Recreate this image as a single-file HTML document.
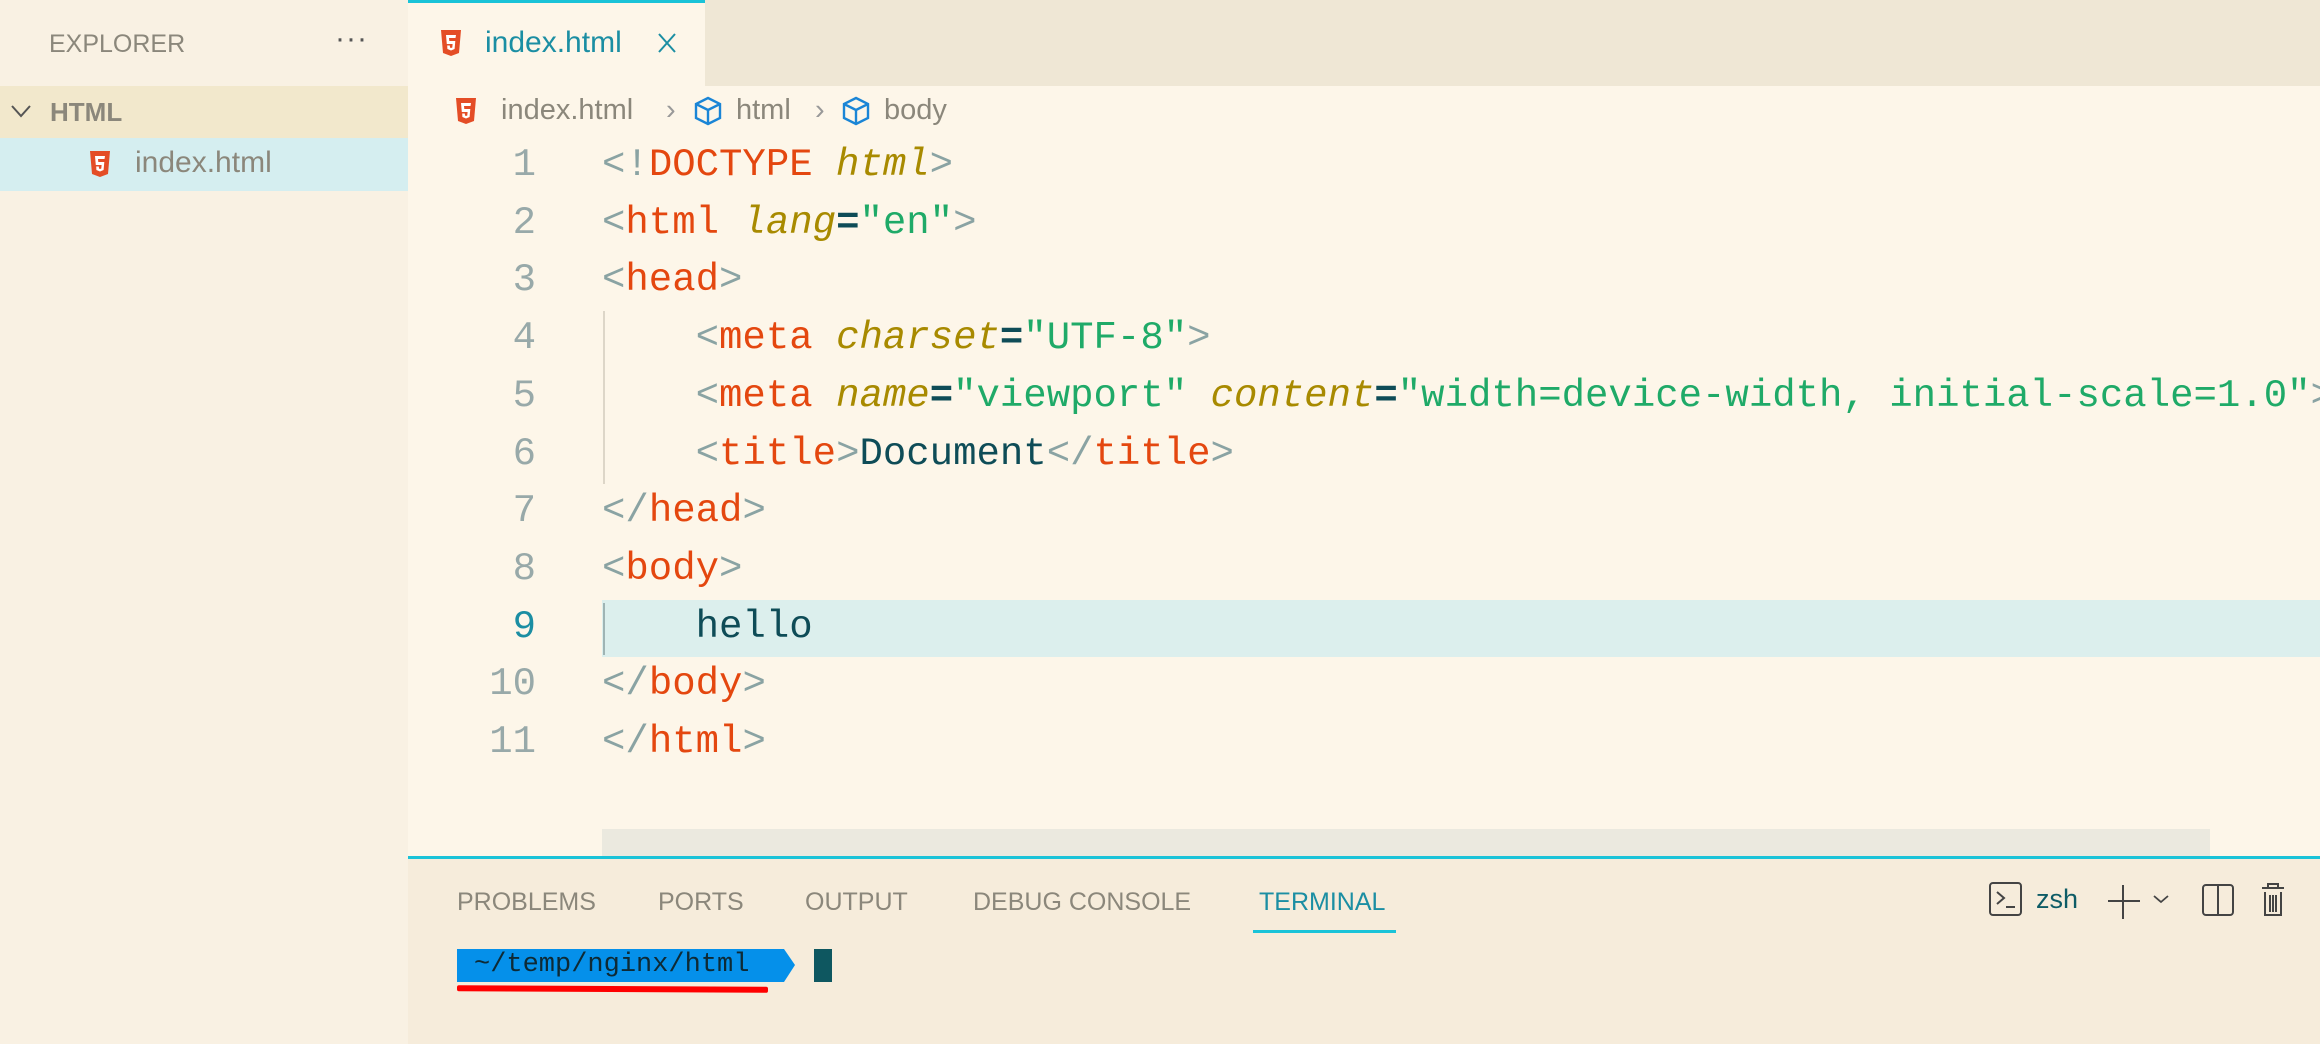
<!DOCTYPE html>
<html><head><style>
*{margin:0;padding:0;box-sizing:border-box}
body{width:2320px;height:1044px;overflow:hidden;background:#fdf6e9;font-family:"Liberation Sans",sans-serif;position:relative}
.side{position:absolute;left:0;top:0;width:408px;height:1044px;background:#f9f1e3}
.abs{position:absolute}
.tabbar{position:absolute;left:408px;top:0;right:0;height:86px;background:#efe7d5}
.tab{position:absolute;left:408px;top:0;width:297px;height:86px;background:#fdf6e9;border-top:3px solid #1ac3d8}
.code{position:absolute;left:0;top:137px;width:2320px;font-family:"Liberation Mono",monospace;font-size:39px;line-height:57.7px;white-space:pre}
.ln{position:absolute;top:0;left:440px;width:96px;text-align:right;color:#98a9a9}
.tx{position:absolute;top:0;left:602px;color:#0e4c57}
.t{color:#e4470f}.a{color:#a88a00;font-style:italic}.s{color:#1faa68}.p{color:#8aa3a3}.e{color:#0e4c57;font-weight:bold}
.panel{position:absolute;left:408px;top:856px;right:0;bottom:0;background:#f6ecdb;border-top:3px solid #1ac3d8}
.ptab{position:absolute;top:888px;font-size:25px;color:#8b877b}
</style></head><body>
<div class="side"></div>
<div class="abs" style="left:49px;top:30px;font-size:25px;color:#8b877b">EXPLORER</div>
<div class="abs" style="left:335px;top:22px;font-size:30px;color:#555;letter-spacing:1px">···</div>
<div class="abs" style="left:0;top:86px;width:408px;height:52px;background:#f2e8cc"></div>
<svg class="abs" style="left:10px;top:102px" width="22" height="18"><path d="M2 4 L11 14 L20 4" fill="none" stroke="#555" stroke-width="2"/></svg>
<div class="abs" style="left:50px;top:97px;font-size:26px;font-weight:bold;color:#8b877b">HTML</div>
<div class="abs" style="left:0;top:138px;width:408px;height:53px;background:#d5eef0"></div>
<svg class="abs" style="left:89px;top:150px" width="22" height="28" viewBox="0 0 22 28"><path d="M1 1H21L19 24L11 27L3 24Z" fill="#e44d26"/><path d="M6 6H16L15.5 9H9L9.3 12H15.3L14.6 20L11 21.5L7.4 20L7.2 16.5H9.8L10 18.5L11 19L12.3 18.5L12.6 15H6.8Z" fill="#fff"/></svg>
<div class="abs" style="left:135px;top:146px;font-size:30px;color:#8b877b">index.html</div>

<div class="tabbar"></div>
<div class="tab"></div>
<svg class="abs" style="left:440px;top:29px" width="22" height="28" viewBox="0 0 22 28"><path d="M1 1H21L19 24L11 27L3 24Z" fill="#e44d26"/><path d="M6 6H16L15.5 9H9L9.3 12H15.3L14.6 20L11 21.5L7.4 20L7.2 16.5H9.8L10 18.5L11 19L12.3 18.5L12.6 15H6.8Z" fill="#fff"/></svg>
<div class="abs" style="left:485px;top:26px;font-size:30px;color:#1b8ea3">index.html</div>
<svg class="abs" style="left:657px;top:32px" width="20" height="22"><path d="M2 2L18 20M18 2L2 20" stroke="#1b8ea3" stroke-width="2"/></svg>

<svg class="abs" style="left:455px;top:97px" width="22" height="28" viewBox="0 0 22 28"><path d="M1 1H21L19 24L11 27L3 24Z" fill="#e44d26"/><path d="M6 6H16L15.5 9H9L9.3 12H15.3L14.6 20L11 21.5L7.4 20L7.2 16.5H9.8L10 18.5L11 19L12.3 18.5L12.6 15H6.8Z" fill="#fff"/></svg>
<div class="abs" style="left:501px;top:94px;font-size:29px;color:#8b877b">index.html</div>
<div class="abs" style="left:666px;top:94px;font-size:29px;color:#999">›</div>
<svg class="abs" style="left:693px;top:96px" width="30" height="30" viewBox="0 0 30 30"><path d="M15 2L27 8V22L15 28L3 22V8Z M3 8L15 14L27 8 M15 14V28" fill="none" stroke="#1a85d6" stroke-width="2.4"/></svg>
<div class="abs" style="left:736px;top:94px;font-size:29px;color:#8b877b">html</div>
<div class="abs" style="left:815px;top:94px;font-size:29px;color:#999">›</div>
<svg class="abs" style="left:841px;top:96px" width="30" height="30" viewBox="0 0 30 30"><path d="M15 2L27 8V22L15 28L3 22V8Z M3 8L15 14L27 8 M15 14V28" fill="none" stroke="#1a85d6" stroke-width="2.4"/></svg>
<div class="abs" style="left:884px;top:94px;font-size:29px;color:#8b877b">body</div>

<div class="abs" style="left:602px;top:600px;right:0;height:57px;background:#dcefed"></div>
<div class="abs" style="left:603px;top:311px;width:2px;height:173px;background:#ddd6c8"></div>
<div class="abs" style="left:603px;top:603px;width:2px;height:52px;background:#9fb4b4"></div>
<div class="code"><div class="ln">1
2
3
4
5
6
7
8
<span style="color:#1b8ea3">9</span>
10
11</div><div class="tx"><span class="p">&lt;!</span><span class="t">DOCTYPE</span> <span class="a">html</span><span class="p">&gt;</span>
<span class="p">&lt;</span><span class="t">html</span> <span class="a">lang</span><span class="e">=</span><span class="s">"en"</span><span class="p">&gt;</span>
<span class="p">&lt;</span><span class="t">head</span><span class="p">&gt;</span>
    <span class="p">&lt;</span><span class="t">meta</span> <span class="a">charset</span><span class="e">=</span><span class="s">"UTF-8"</span><span class="p">&gt;</span>
    <span class="p">&lt;</span><span class="t">meta</span> <span class="a">name</span><span class="e">=</span><span class="s">"viewport"</span> <span class="a">content</span><span class="e">=</span><span class="s">"width=device-width, initial-scale=1.0"</span><span class="p">&gt;</span>
    <span class="p">&lt;</span><span class="t">title</span><span class="p">&gt;</span>Document<span class="p">&lt;/</span><span class="t">title</span><span class="p">&gt;</span>
<span class="p">&lt;/</span><span class="t">head</span><span class="p">&gt;</span>
<span class="p">&lt;</span><span class="t">body</span><span class="p">&gt;</span>
    hello
<span class="p">&lt;/</span><span class="t">body</span><span class="p">&gt;</span>
<span class="p">&lt;/</span><span class="t">html</span><span class="p">&gt;</span></div></div>
<div class="abs" style="left:602px;top:829px;width:1608px;height:27px;background:#ebe9df"></div>

<div class="panel"></div>
<div class="ptab" style="left:457px">PROBLEMS</div>
<div class="ptab" style="left:658px">PORTS</div>
<div class="ptab" style="left:805px">OUTPUT</div>
<div class="ptab" style="left:973px">DEBUG CONSOLE</div>
<div class="ptab" style="left:1259px;color:#1b8ea3">TERMINAL</div>
<div class="abs" style="left:1253px;top:930px;width:143px;height:3px;background:#1ac3d8"></div>
<svg class="abs" style="left:1988px;top:881px" width="300" height="40">
<rect x="2" y="2" width="31" height="32" rx="3" fill="none" stroke="#444" stroke-width="2"/>
<path d="M9 11L16 17L9 23M18 26H27" fill="none" stroke="#444" stroke-width="2"/>
<path d="M135 4V38M120 20H152" stroke="#444" stroke-width="2"/>
<path d="M166 15L173 21L180 15" fill="none" stroke="#444" stroke-width="1.8"/>
<rect x="215" y="4" width="30" height="30" rx="3" fill="none" stroke="#444" stroke-width="2"/>
<path d="M230 4V34" stroke="#444" stroke-width="2"/>
<path d="M274 7H296M280 7V3H290V7M277 11V34H293V11M282 14V31M285 14V31M288 14V31" fill="none" stroke="#444" stroke-width="2"/>
</svg>
<div class="abs" style="left:2036px;top:884px;font-size:27px;color:#0e5c66">zsh</div>
<svg class="abs" style="left:457px;top:949px" width="340" height="34"><path d="M0 0H327L338 16L327 33H0Z" fill="#0590ea"/></svg>
<div class="abs" style="left:474px;top:949px;font-family:'Liberation Mono',monospace;font-size:27px;line-height:33px;color:#0e2a35">~/temp/nginx/html</div>
<div class="abs" style="left:814px;top:949px;width:18px;height:33px;background:#0e5760"></div>
<div class="abs" style="left:457px;top:986px;width:311px;height:6px;background:#f00;border-radius:2px;transform:rotate(0.3deg)"></div>
</body></html>
